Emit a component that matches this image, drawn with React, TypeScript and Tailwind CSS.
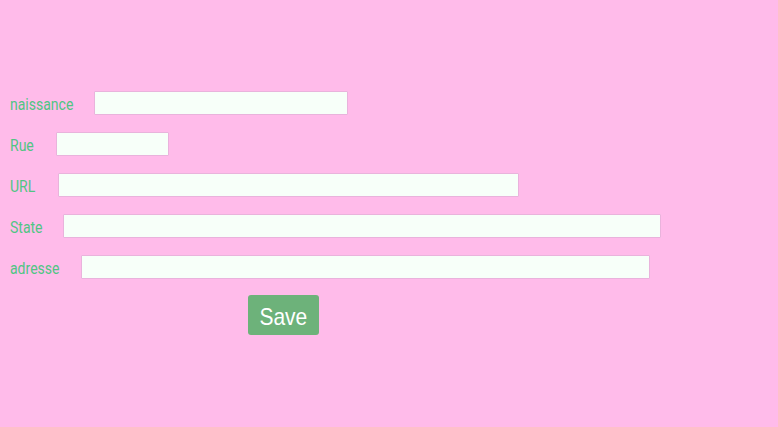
const fields = [
  { label: "naissance", labelW: "w-[63px]", width: "w-[254px]" },
  { label: "Rue", labelW: "w-[25px]", width: "w-[113px]" },
  { label: "URL", labelW: "w-[27px]", width: "w-[461px]" },
  { label: "State", labelW: "w-[32px]", width: "w-[598px]" },
  { label: "adresse", labelW: "w-[50px]", width: "w-[569px]" },
];

export default function App() {
  return (
    <div className="min-h-[427px] w-full bg-[#ffbbea] pt-[91px] pl-[10px] font-['Roboto',sans-serif]">
      <form className="flex flex-col gap-[17px]" onSubmit={(e) => e.preventDefault()}>
        {fields.map((f) => (
          <div key={f.label} className="flex h-6 items-center gap-[21px]">
            <label className={`${f.labelW} shrink-0 pt-[3px] text-[16px] leading-6 text-[#50c584]`}>
              <span className="inline-block origin-left scale-x-[0.875] whitespace-nowrap">{f.label}</span>
            </label>
            <input
              type="text"
              className={`h-6 ${f.width} rounded-[1px] border border-[#e9b3dc] bg-[#f7fff9] outline-none`}
            />
          </div>
        ))}
      </form>
      <button
        type="button"
        className="ml-[238px] mt-4 h-10 w-[71px] rounded-[3px] bg-[#6db27a] pt-[3px] font-['Liberation_Sans',sans-serif] text-[24px] text-white"
      >
        <span className="inline-block scale-x-[0.875]">Save</span>
      </button>
    </div>
  );
}
